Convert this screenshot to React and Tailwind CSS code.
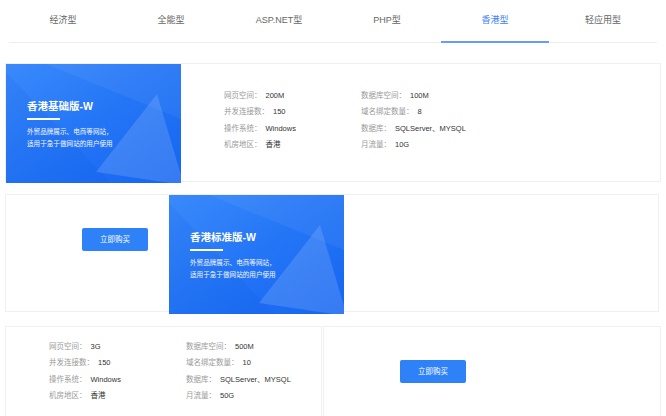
import React from "react";

const tabs = ["经济型", "全能型", "ASP.NET型", "PHP型", "香港型", "轻应用型"];

function Panel({ title }) {
  return (
    <div className="relative w-[175px] h-[119px] shrink-0 overflow-hidden bg-gradient-to-br from-[#3a8afb] via-[#2475f6] to-[#1565f1]">
      <svg className="absolute inset-0" width="175" height="119" viewBox="0 0 175 119">
        <polygon points="0,8 0,119 105,119" fill="#0a4fd8" fillOpacity="0.10" />
        <polygon points="40,0 175,0 175,55" fill="#ffffff" fillOpacity="0.05" />
        <polygon points="151,30 90,108 178,121" fill="#ffffff" fillOpacity="0.14" />
      </svg>
      <div className="relative pl-[21px] pt-[35px] text-white">
        <div className="text-[10.5px] font-bold leading-[14px]">{title}</div>
        <div className="w-[33px] h-[2px] bg-white mt-[5px]" />
        <div className="text-[6.6px] leading-[12px] mt-[6px] opacity-95">
          <div>外贸品牌展示、电商等网站，</div>
          <div>适用于急于做网站的用户使用</div>
        </div>
      </div>
    </div>
  );
}

function Specs({ rows }) {
  return (
    <div className="grid grid-cols-[137px_auto] text-[7.5px] leading-[16.3px]">
      {rows.map(([label, value], i) => (
        <div key={i} className="flex gap-[4px] whitespace-nowrap">
          <span className="text-[#9a9a9a]">{label}</span>
          <span className="text-[#333]">{value}</span>
        </div>
      ))}
    </div>
  );
}

function BuyButton() {
  return (
    <div className="w-[66px] h-[23px] rounded-[2px] bg-[#2f81f7] text-white text-[7.5px] flex items-center justify-center">
      立即购买
    </div>
  );
}

const specsA = [
  ["网页空间：", "200M"], ["数据库空间：", "100M"],
  ["并发连接数：", "150"], ["域名绑定数量：", "8"],
  ["操作系统：", "Windows"], ["数据库：", "SQLServer、MYSQL"],
  ["机房地区：", "香港"], ["月流量：", "10G"],
];

const specsB = [
  ["网页空间：", "3G"], ["数据库空间：", "500M"],
  ["并发连接数：", "150"], ["域名绑定数量：", "10"],
  ["操作系统：", "Windows"], ["数据库：", "SQLServer、MYSQL"],
  ["机房地区：", "香港"], ["月流量：", "50G"],
];

export default function App() {
  return (
    <div className="w-[666px] h-[416px] overflow-hidden bg-white font-['Liberation_Sans','Noto_Sans_CJK_SC',sans-serif]">
      <div className="ml-[9px] w-[648px] h-[43px] flex border-b border-[#ededed]">
        {tabs.map((t, i) => (
          <div
            key={t}
            className={`flex-1 flex items-center justify-center text-[9px] -mb-px border-b-2 ${
              i === 4 ? "border-[#6b9bf5] text-[#3b82f6]" : "border-transparent text-[#666]"
            }`}
          >
            {t}
          </div>
        ))}
      </div>

      <div className="ml-[5px] mt-[20px] w-[656px] h-[119px] border border-[#f0f0f0] flex">
        <Panel title="香港基础版-W" />
        <div className="pl-[43px] pt-[24px]">
          <Specs rows={specsA} />
        </div>
      </div>

      <div className="ml-[5px] mt-[12px] w-[654px] h-[118px] border border-[#f0f0f0] flex">
        <div className="w-[163px] pl-[76px] pt-[33px]">
          <BuyButton />
        </div>
        <Panel title="香港标准版-W" />
      </div>

      <div className="ml-[5px] mt-[14px] flex gap-[1px]">
        <div className="w-[317px] h-[119px] border border-[#f0f0f0] pl-[43px] pt-[12px]">
          <Specs rows={specsB} />
        </div>
        <div className="w-[338px] h-[119px] border border-[#f0f0f0] pl-[76px] pt-[33px]">
          <BuyButton />
        </div>
      </div>
    </div>
  );
}
